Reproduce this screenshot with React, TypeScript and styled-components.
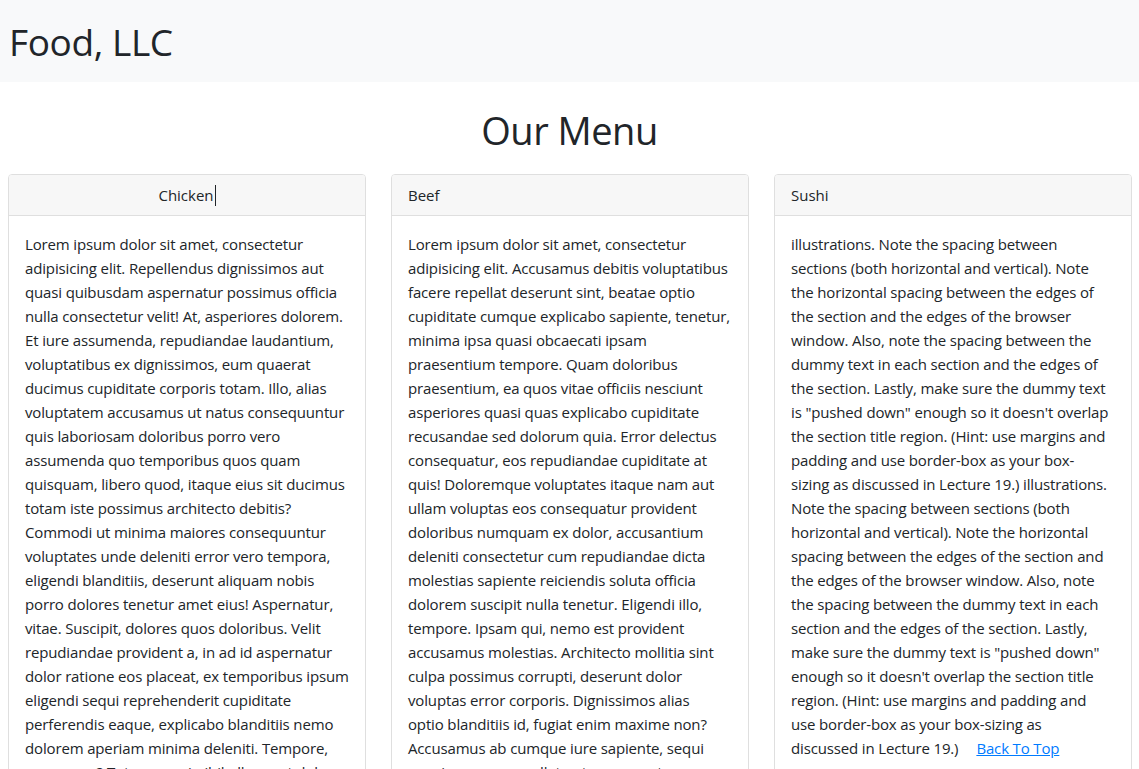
import React from "react";
import styled, { createGlobalStyle } from "styled-components";

const GlobalStyle = createGlobalStyle`
    html, body {
        margin: 0;
        padding: 0;
        overflow: hidden;
        background: #ffffff;
    }
    * {
        box-sizing: border-box;
    }
    body {
        font-family: "Open Sans", "Noto Sans", "Liberation Sans", sans-serif;
        color: #212529;
    }
`;

const Header = styled.header`
    display: flex;
    align-items: center;
    height: 82px;
    padding-left: 9px;
    background-color: #f8f9fa;
`;

const Brand = styled.h1`
    margin: 0;
    font-size: 37px;
    font-weight: 400;
    line-height: 1;
    letter-spacing: -0.4px;
`;

const PageTitle = styled.h1`
    margin: 24px 0 20px;
    text-align: center;
    font-size: 38px;
    font-weight: 400;
    line-height: 48px;
    letter-spacing: -0.5px;
`;

const Sections = styled.main`
    display: grid;
    grid-template-columns: repeat(3, 1fr);
    gap: 25px;
    margin: 0 7px 0 8px;
`;

const Card = styled.section`
    border: 1px solid #dfdfdf;
    border-radius: 4px;
    background: #ffffff;
`;

const CardHead = styled.div<{ $center?: boolean }>`
    height: 41px;
    padding: 8px 16px;
    font-size: 15px;
    line-height: 24px;
    text-align: ${(p) => (p.$center ? "center" : "left")};
    background-color: #f7f7f7;
    border-bottom: 1px solid #dfdfdf;
    border-radius: 3px 3px 0 0;
`;

const Caret = styled.span`
    display: inline-block;
    width: 1px;
    height: 21px;
    margin-left: 1px;
    vertical-align: -5px;
    background: #212529;
`;

const CardBody = styled.div`
    padding: 16px;
    font-size: 15px;
    line-height: 24px;
    white-space: nowrap;
    letter-spacing: -0.15px;
`;

const Line = styled.div``;

const TopLink = styled.a`
    margin-left: 18px;
    color: #007bff;
    text-decoration: underline;
`;

const chicken = [
    "Lorem ipsum dolor sit amet, consectetur",
    "adipisicing elit. Repellendus dignissimos aut",
    "quasi quibusdam aspernatur possimus officia",
    "nulla consectetur velit! At, asperiores dolorem.",
    "Et iure assumenda, repudiandae laudantium,",
    "voluptatibus ex dignissimos, eum quaerat",
    "ducimus cupiditate corporis totam. Illo, alias",
    "voluptatem accusamus ut natus consequuntur",
    "quis laboriosam doloribus porro vero",
    "assumenda quo temporibus quos quam",
    "quisquam, libero quod, itaque eius sit ducimus",
    "totam iste possimus architecto debitis?",
    "Commodi ut minima maiores consequuntur",
    "voluptates unde deleniti error vero tempora,",
    "eligendi blanditiis, deserunt aliquam nobis",
    "porro dolores tenetur amet eius! Aspernatur,",
    "vitae. Suscipit, dolores quos doloribus. Velit",
    "repudiandae provident a, in ad id aspernatur",
    "dolor ratione eos placeat, ex temporibus ipsum",
    "eligendi sequi reprehenderit cupiditate",
    "perferendis eaque, explicabo blanditiis nemo",
    "dolorem aperiam minima deleniti. Tempore,",
    "numquam? Totam quasi nihil ullam aut dolor",
    "possimus eveniet laborum quod sint."
];

const beef = [
    "Lorem ipsum dolor sit amet, consectetur",
    "adipisicing elit. Accusamus debitis voluptatibus",
    "facere repellat deserunt sint, beatae optio",
    "cupiditate cumque explicabo sapiente, tenetur,",
    "minima ipsa quasi obcaecati ipsam",
    "praesentium tempore. Quam doloribus",
    "praesentium, ea quos vitae officiis nesciunt",
    "asperiores quasi quas explicabo cupiditate",
    "recusandae sed dolorum quia. Error delectus",
    "consequatur, eos repudiandae cupiditate at",
    "quis! Doloremque voluptates itaque nam aut",
    "ullam voluptas eos consequatur provident",
    "doloribus numquam ex dolor, accusantium",
    "deleniti consectetur cum repudiandae dicta",
    "molestias sapiente reiciendis soluta officia",
    "dolorem suscipit nulla tenetur. Eligendi illo,",
    "tempore. Ipsam qui, nemo est provident",
    "accusamus molestias. Architecto mollitia sint",
    "culpa possimus corrupti, deserunt dolor",
    "voluptas error corporis. Dignissimos alias",
    "optio blanditiis id, fugiat enim maxime non?",
    "Accusamus ab cumque iure sapiente, sequi",
    "quasi cumque repellat aut consequatur nemo",
    "harum dolores."
];

const sushi = [
    "illustrations. Note the spacing between",
    "sections (both horizontal and vertical). Note",
    "the horizontal spacing between the edges of",
    "the section and the edges of the browser",
    "window. Also, note the spacing between the",
    "dummy text in each section and the edges of",
    "the section. Lastly, make sure the dummy text",
    "is \"pushed down\" enough so it doesn't overlap",
    "the section title region. (Hint: use margins and",
    "padding and use border-box as your box-",
    "sizing as discussed in Lecture 19.) illustrations.",
    "Note the spacing between sections (both",
    "horizontal and vertical). Note the horizontal",
    "spacing between the edges of the section and",
    "the edges of the browser window. Also, note",
    "the spacing between the dummy text in each",
    "section and the edges of the section. Lastly,",
    "make sure the dummy text is \"pushed down\"",
    "enough so it doesn't overlap the section title",
    "region. (Hint: use margins and padding and",
    "use border-box as your box-sizing as"
];

const App = () => {
    return (
        <>
            <GlobalStyle />
            <Header id="top">
                <Brand>Food, LLC</Brand>
            </Header>
            <PageTitle>Our Menu</PageTitle>
            <Sections>
                <Card>
                    <CardHead $center>
                        Chicken<Caret />
                    </CardHead>
                    <CardBody>
                        {chicken.map((l, i) => <Line key={i}>{l}</Line>)}
                    </CardBody>
                </Card>
                <Card>
                    <CardHead>Beef</CardHead>
                    <CardBody>
                        {beef.map((l, i) => <Line key={i}>{l}</Line>)}
                    </CardBody>
                </Card>
                <Card>
                    <CardHead>Sushi</CardHead>
                    <CardBody>
                        {sushi.map((l, i) => <Line key={i}>{l}</Line>)}
                        <Line>
                            discussed in Lecture 19.)
                            <TopLink href="#top">Back To Top</TopLink>
                        </Line>
                    </CardBody>
                </Card>
            </Sections>
        </>
    );
};

export default App;
